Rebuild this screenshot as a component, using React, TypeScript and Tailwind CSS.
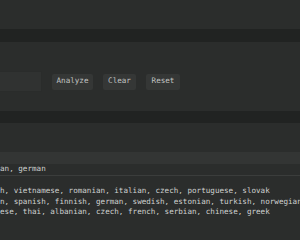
import React from "react";

const mono = { fontFamily: '"DejaVu Sans Mono", monospace' };

export default function App() {
  return (
    <div
      className="w-[300px] h-[240px] overflow-hidden bg-[#2b2d2c] text-[#cfd1d0] text-[7.6px] leading-[10.5px] flex flex-col"
      style={mono}
    >
      <div className="h-[29px] shrink-0" />
      <div className="h-[13px] shrink-0 bg-[#212322]" />
      <div className="h-[29px] shrink-0" />
      <div className="h-[21px] shrink-0 flex items-center gap-[10px]">
        <div className="w-[42px] h-[21px] bg-[#303231] border border-[#2a2c2b] border-l-0" />
        <button className="h-[16px] w-[41px] bg-[#353736] rounded-[2px] text-[#c2c4c3]">Analyze</button>
        <button className="h-[16px] w-[33px] bg-[#353736] rounded-[2px] text-[#c2c4c3]">Clear</button>
        <button className="h-[16px] w-[34px] bg-[#353736] rounded-[2px] text-[#c2c4c3]">Reset</button>
      </div>
      <div className="h-[19px] shrink-0" />
      <div className="h-[12px] shrink-0 bg-[#212322]" />
      <div className="h-[29px] shrink-0" />
      <div className="h-[12px] shrink-0 bg-[#333534]" />
      <div className="h-[11px] shrink-0 flex items-center whitespace-nowrap">an, german</div>
      <div className="h-px shrink-0 bg-[#3b3d3c]" />
      <div className="pt-[10px] whitespace-nowrap flex flex-col">
        <div>h, vietnamese, romanian, italian, czech, portuguese, slovak</div>
        <div>n, spanish, finnish, german, swedish, estonian, turkish, norwegian</div>
        <div>ese, thai, albanian, czech, french, serbian, chinese, greek</div>
      </div>
    </div>
  );
}
